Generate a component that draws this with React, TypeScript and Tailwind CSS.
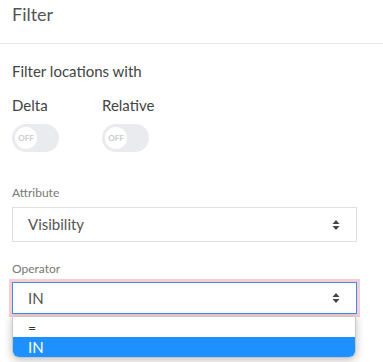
import React from "react";

function Toggle() {
  return (
    <div className="w-[47px] h-[28px] rounded-full bg-[#e9ebee] flex items-center px-[3px]">
      <div className="w-[22px] h-[22px] rounded-full bg-white flex items-center justify-center text-[8px] font-bold text-[#c9ccd1]">
        OFF
      </div>
    </div>
  );
}

function Arrows() {
  return (
    <svg width="8" height="12" viewBox="0 0 8 12" className="text-[#444]">
      <path d="M4 1 L7.5 5 H0.5 Z" fill="currentColor" />
      <path d="M4 11 L7.5 7 H0.5 Z" fill="currentColor" />
    </svg>
  );
}

export default function App() {
  return (
    <div
      className="w-[383px] h-[362px] bg-white overflow-hidden text-[#555]"
      style={{ fontFamily: "Lato, 'Open Sans', sans-serif" }}
    >
      {/* header */}
      <div className="h-[44px] border-b border-[#e6e6e6] px-3 pt-[2px]">
        <h1 className="text-[18px] leading-[24px] text-[#555]">Filter</h1>
      </div>

      <div className="px-3 pt-[17px]">
        <p className="text-[15px] leading-[20px] text-[#444]">Filter locations with</p>

        <div className="flex gap-[43px] mt-[14px]">
          <div className="flex flex-col gap-[9px]">
            <span className="text-[15px] leading-[20px] text-[#444]">Delta</span>
            <Toggle />
          </div>
          <div className="flex flex-col gap-[9px]">
            <span className="text-[15px] leading-[20px] text-[#444]">Relative</span>
            <Toggle />
          </div>
        </div>

        {/* attribute */}
        <label className="block text-[12px] leading-[16px] text-[#777] mt-[33px]">Attribute</label>
        <div className="mt-[6px] w-[345px] h-[35px] border border-[#dcdfe4] flex items-center justify-between pl-[15px] pr-[16px]">
          <span className="text-[15px] text-[#555]">Visibility</span>
          <Arrows />
        </div>

        {/* operator */}
        <label className="block text-[12px] leading-[16px] text-[#777] mt-[19px]">Operator</label>
        <div className="relative mt-[5px]">
          <div className="w-[345px] h-[32px] border border-[#3a8ee6] ring-[3px] ring-[#f8cdd3] flex items-center justify-between pl-[15px] pr-[16px] bg-white">
            <span className="text-[15px] text-[#555]">IN</span>
            <Arrows />
          </div>
          <div className="mt-[5px] w-[90px] h-[20px] bg-[#d9534f]" />
          <div className="absolute left-0 top-[34px] w-[344px] bg-white rounded-b-[7px] border border-[#c8c8c8] shadow-[0_2px_8px_rgba(0,0,0,0.25)] overflow-hidden">
            <div className="h-[20px] pl-[15px] flex items-center text-[14px] text-[#333]">=</div>
            <div className="h-[20px] pl-[15px] flex items-center text-[15px] text-white bg-[#1e90ff]">IN</div>
          </div>
        </div>
      </div>
    </div>
  );
}
